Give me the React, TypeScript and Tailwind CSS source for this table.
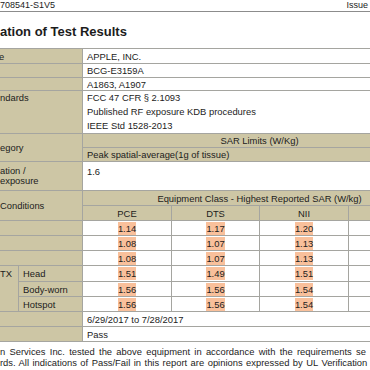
import React from "react";

const TAN = "bg-[#cdc6a5]";
const WHITE = "bg-white";
const BASE = "flex items-center whitespace-nowrap overflow-hidden text-[9.4px] leading-[13px]";

function Hl({ v }: { v: string }) {
  return <span className="inline-block h-[13px] bg-[#f9c09b] leading-[13px]">{v}</span>;
}

type Row = { row: string; vals: string[] };

const dataRows: Row[] = [
  { row: "row-start-10", vals: ["1.14", "1.17", "1.20"] },
  { row: "row-start-11", vals: ["1.08", "1.07", "1.13"] },
  { row: "row-start-12", vals: ["1.08", "1.07", "1.13"] },
  { row: "row-start-13", vals: ["1.51", "1.49", "1.51"] },
  { row: "row-start-14", vals: ["1.56", "1.56", "1.54"] },
  { row: "row-start-15", vals: ["1.56", "1.56", "1.54"] },
];

const colStarts = ["col-start-3", "col-start-4", "col-start-5"];

export default function App() {
  return (
    <div className="w-[370px] h-[370px] overflow-hidden bg-white text-[#1c1c1c] font-['Liberation_Sans',Arial,sans-serif]">
      <div className="flex h-[12px] items-center justify-between border-b border-[#8c8c8c] pr-[2px] text-[9px] leading-[11px]">
        <span>708541-S1V5</span>
        <span>Issue</span>
      </div>
      <div className="mt-[12px] text-[13px] font-bold leading-[15px] whitespace-nowrap">ation of Test Results</div>

      <div className="mt-[9px] grid w-max grid-cols-[18px_63px_88px_87px_88px_87px] grid-rows-[14px_13px_12px_42px_13px_13px_28px_14px_14px_14px_14px_14px_15px_14px_14px_14px_14px] gap-px bg-[#a5a5a0] py-px pr-px">
        {/* row 1-3 */}
        <div className={`${BASE} ${TAN} col-start-1 col-span-2 row-start-1`}>
          <span className="-ml-[1px]">e</span>
        </div>
        <div className={`${BASE} ${WHITE} col-start-3 col-span-4 row-start-1 pl-[4px]`}>APPLE, INC.</div>
        <div className={`${BASE} ${TAN} col-start-1 col-span-2 row-start-2`} />
        <div className={`${BASE} ${WHITE} col-start-3 col-span-4 row-start-2 pl-[4px]`}>BCG-E3159A</div>
        <div className={`${BASE} ${TAN} col-start-1 col-span-2 row-start-3`} />
        <div className={`${BASE} ${WHITE} col-start-3 col-span-4 row-start-3 pl-[4px]`}>A1863, A1907</div>

        {/* standards */}
        <div className={`${BASE} ${TAN} col-start-1 col-span-2 row-start-4 !items-start leading-[14px]`}>
          <span className="leading-[14px]">ndards</span>
        </div>
        <div className={`${BASE} ${WHITE} col-start-3 col-span-4 row-start-4 flex-col !items-start pl-[4px]`}>
          <span className="leading-[14px]">FCC 47 CFR § 2.1093</span>
          <span className="leading-[14px]">Published RF exposure KDB procedures</span>
          <span className="leading-[14px]">IEEE Std 1528-2013</span>
        </div>

        {/* category */}
        <div className={`${BASE} ${TAN} col-start-1 col-span-2 row-start-5 row-span-2`}>egory</div>
        <div className={`${BASE} ${TAN} col-start-3 col-span-4 row-start-5 justify-center`}>SAR Limits (W/Kg)</div>
        <div className={`${BASE} ${TAN} col-start-3 col-span-4 row-start-6 pl-[4px]`}>Peak spatial-average(1g of tissue)</div>

        {/* exposure */}
        <div className={`${BASE} ${TAN} col-start-1 col-span-2 row-start-7 flex-col !items-start justify-center`}>
          <span className="leading-[10.5px]">ation /</span>
          <span className="leading-[10.5px]">exposure</span>
        </div>
        <div className={`${BASE} ${WHITE} col-start-3 col-span-4 row-start-7 !items-start pl-[4px] pt-[3px]`}>1.6</div>

        {/* conditions */}
        <div className={`${BASE} ${TAN} col-start-1 col-span-2 row-start-8 row-span-2`}>Conditions</div>
        <div className={`${BASE} ${TAN} col-start-3 col-span-4 row-start-8 justify-center`}>
          Equipment Class - Highest Reported SAR (W/kg)
        </div>
        <div className={`${BASE} ${TAN} col-start-3 row-start-9 justify-center`}>PCE</div>
        <div className={`${BASE} ${TAN} col-start-4 row-start-9 justify-center`}>DTS</div>
        <div className={`${BASE} ${TAN} col-start-5 row-start-9 justify-center`}>NII</div>
        <div className={`${BASE} ${TAN} col-start-6 row-start-9`} />

        {/* plain labels rows 10-12 */}
        <div className={`${BASE} ${TAN} col-start-1 col-span-2 row-start-10`} />
        <div className={`${BASE} ${TAN} col-start-1 col-span-2 row-start-11`} />
        <div className={`${BASE} ${TAN} col-start-1 col-span-2 row-start-12`} />

        {/* TX */}
        <div className={`${BASE} ${TAN} col-start-1 row-start-13 row-span-3 !items-start`}>
          <span className="leading-[15px]">TX</span>
        </div>
        <div className={`${BASE} ${TAN} col-start-2 row-start-13 pl-[4px]`}>Head</div>
        <div className={`${BASE} ${TAN} col-start-2 row-start-14 pl-[4px]`}>Body-worn</div>
        <div className={`${BASE} ${TAN} col-start-2 row-start-15 pl-[4px]`}>Hotspot</div>

        {dataRows.map((r) => (
          <React.Fragment key={r.row}>
            {r.vals.map((v, i) => (
              <div key={i} className={`${BASE} ${WHITE} ${colStarts[i]} ${r.row} justify-center`}>
                <Hl v={v} />
              </div>
            ))}
            <div className={`${BASE} ${WHITE} col-start-6 ${r.row}`} />
          </React.Fragment>
        ))}

        {/* date / result */}
        <div className={`${BASE} ${TAN} col-start-1 col-span-2 row-start-16`} />
        <div className={`${BASE} ${WHITE} col-start-3 col-span-4 row-start-16 pl-[4px]`}>6/29/2017 to 7/28/2017</div>
        <div className={`${BASE} ${TAN} col-start-1 col-span-2 row-start-17`} />
        <div className={`${BASE} ${WHITE} col-start-3 col-span-4 row-start-17 pl-[4px]`}>Pass</div>
      </div>

      <div className="mt-[4px] text-[9.4px] leading-[11px] whitespace-nowrap">
        <div className="[word-spacing:1.7px]">n Services Inc. tested the above equipment in accordance with the requirements se</div>
        <div className="[word-spacing:0.9px]">rds. All indications of Pass/Fail in this report are opinions expressed by UL Verification</div>
      </div>
    </div>
  );
}
